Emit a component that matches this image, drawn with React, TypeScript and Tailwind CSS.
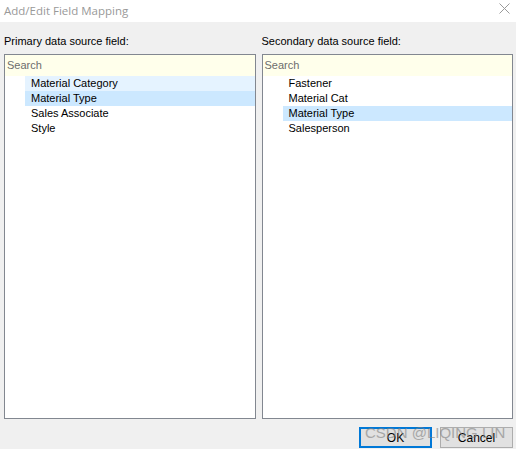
const primaryFields = [
  { name: 'Material Category', state: 'hover' },
  { name: 'Material Type', state: 'selected' },
  { name: 'Sales Associate', state: 'none' },
  { name: 'Style', state: 'none' },
];

const secondaryFields = [
  { name: 'Fastener', state: 'none' },
  { name: 'Material Cat', state: 'none' },
  { name: 'Material Type', state: 'selected' },
  { name: 'Salesperson', state: 'none' },
];

type Field = { name: string; state: string };

function FieldList({ label, fields }: { label: string; fields: Field[] }) {
  return (
    <div className="flex flex-col flex-1 min-w-0">
      <div className="h-[16px] leading-[16px] text-[11px] text-black mb-[5px]">{label}</div>
      <div className="flex-1 border border-[#828790] bg-white flex flex-col">
        <div className="h-[21px] bg-[#ffffeb] flex items-center pl-[2px] text-[11px] text-[#6d6d6d]">
          Search
        </div>
        <div>
          {fields.map(f => (
            <div
              key={f.name}
              className={
                'ml-[20px] h-[15px] leading-[15px] pl-[6px] text-[11px] text-black ' +
                (f.state === 'selected' ? 'bg-[#cce8ff]' : f.state === 'hover' ? 'bg-[#e5f3ff]' : '')
              }
            >
              {f.name}
            </div>
          ))}
        </div>
      </div>
    </div>
  );
}

export default function App() {
  return (
    <div
      className="w-[516px] h-[449px] flex flex-col bg-[#f0f0f0] relative overflow-hidden"
      style={{ fontFamily: '"Liberation Sans", Arial, sans-serif' }}
    >
      <div className="h-[22px] bg-white flex items-center justify-between pl-[4px] pr-[6px]">
        <span className="text-[11.5px] text-[#999999]" style={{ fontFamily: '"Open Sans", sans-serif' }}>
          Add/Edit Field Mapping
        </span>
        <svg width="11" height="11" viewBox="0 0 11 11" className="mb-[6px]">
          <path d="M0.5 0.5 L10.5 10.5 M10.5 0.5 L0.5 10.5" stroke="#9a9a9a" strokeWidth="1" />
        </svg>
      </div>
      <div className="flex-1 flex flex-col pt-[11px] pl-[4px] pr-[3px]">
        <div className="flex-1 flex gap-[6px]">
          <FieldList label="Primary data source field:" fields={primaryFields} />
          <FieldList label="Secondary data source field:" fields={secondaryFields} />
        </div>
        <div className="flex justify-end gap-[8px] mt-[8px] mb-[1px]">
          <button className="w-[73px] h-[21px] border-2 border-[#0078d7] bg-[#e1e1e1] text-[12px] text-black">
            OK
          </button>
          <button className="w-[73px] h-[21px] border border-[#adadad] bg-[#e1e1e1] text-[12px] text-black">
            Cancel
          </button>
        </div>
      </div>
      <div className="absolute left-[365px] top-[423px] whitespace-nowrap text-[15px] leading-[20px] text-[#808080] opacity-60 pointer-events-none">
        CSDN @LIQING LIN
      </div>
    </div>
  );
}
